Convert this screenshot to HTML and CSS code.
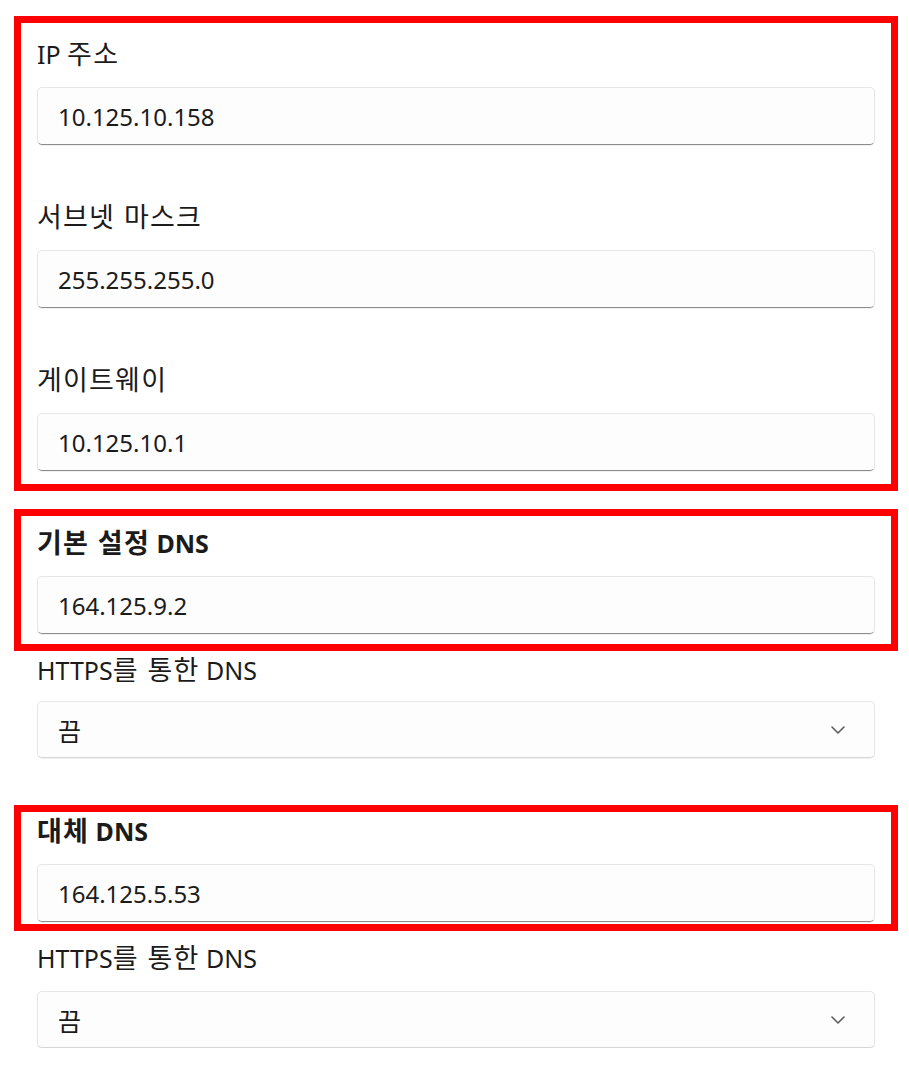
FILE: index.html
```html
<!DOCTYPE html>
<html lang="ko">
<head>
<meta charset="utf-8">
<title>IP 설정</title>
<link rel="stylesheet" href="styles.css">
</head>
<body>
<main class="page">
  <section class="mark mark-ip">
    <div class="field">
      <div class="label">IP <span class="ko">주소</span></div>
      <div class="input">10.125.10.158</div>
    </div>
    <div class="field">
      <div class="label"><span class="ko">서브넷 마스크</span></div>
      <div class="input">255.255.255.0</div>
    </div>
    <div class="field">
      <div class="label"><span class="ko">게이트웨이</span></div>
      <div class="input">10.125.10.1</div>
    </div>
  </section>

  <section class="mark mark-dns">
    <div class="field">
      <div class="label bold"><span class="ko">기본 설정</span> DNS</div>
      <div class="input">164.125.9.2</div>
    </div>
  </section>
  <div class="field plain">
    <div class="label">HTTPS<span class="ko">를 통한</span> DNS</div>
    <div class="select">
      <span class="ko">끔</span>
      <svg class="chev" width="16" height="10" viewBox="0 0 16 10"><path d="M2 2 L8 8 L14 2" fill="none" stroke="#5c5c5c" stroke-width="1.6" stroke-linecap="round" stroke-linejoin="round"/></svg>
    </div>
  </div>

  <section class="mark mark-dns alt">
    <div class="field">
      <div class="label bold"><span class="ko">대체</span> DNS</div>
      <div class="input">164.125.5.53</div>
    </div>
  </section>
  <div class="field plain last">
    <div class="label">HTTPS<span class="ko">를 통한</span> DNS</div>
    <div class="select">
      <span class="ko">끔</span>
      <svg class="chev" width="16" height="10" viewBox="0 0 16 10"><path d="M2 2 L8 8 L14 2" fill="none" stroke="#5c5c5c" stroke-width="1.6" stroke-linecap="round" stroke-linejoin="round"/></svg>
    </div>
  </div>
</main>
</body>
</html>
```

FILE: styles.css
```css
* { box-sizing: border-box; }

html, body {
  margin: 0;
  padding: 0;
  background: #ffffff;
}

body {
  font-family: "Noto Sans", "Noto Sans CJK KR", sans-serif;
  font-size: 24px;
  color: #1b1b1b;
}

.ko {
  font-family: "Noto Sans CJK KR", sans-serif;
  font-size: 27px;
  letter-spacing: 1.2px;
}

.page {
  width: 909px;
  padding: 16px 34px 0 37px;
  display: flex;
  flex-direction: column;
}

.mark {
  margin: 0 -23px;
  border: 7px solid #ff0000;
  padding: 12px 16px 13px;
  display: flex;
  flex-direction: column;
  gap: 53px;
}

.mark-dns {
  margin-top: 18px;
  padding: 8px 16px 10px;
}

.mark-dns.alt {
  margin-top: 47px;
  padding: 0 16px 2px;
}

.field {
  display: flex;
  flex-direction: column;
  gap: 12px;
}

.label {
  height: 40px;
  line-height: 36px;
  white-space: nowrap;
  font-size: 25px;
}

.label.bold {
  font-weight: 700;
}

.label.bold .ko {
  font-weight: 700;
}

.plain {
  gap: 10px;
}

.plain.last {
  margin-top: 8px;
  gap: 12px;
}

.input,
.select {
  height: 58px;
  border: 1px solid #e6e6e6;
  border-bottom: 1.5px solid #8c8c8c;
  border-radius: 5px;
  background: #fdfdfd;
  padding: 0 20px;
  display: flex;
  align-items: center;
  box-shadow: 0 1px 1px rgba(0, 0, 0, 0.06);
}

.select {
  height: 57px;
  justify-content: space-between;
  border-bottom: 1.5px solid #d6d6d6;
  padding: 0 28px 0 20px;
}

.select .ko {
  font-size: 25px;
  letter-spacing: 0;
}

.chev {
  display: block;
}
```
